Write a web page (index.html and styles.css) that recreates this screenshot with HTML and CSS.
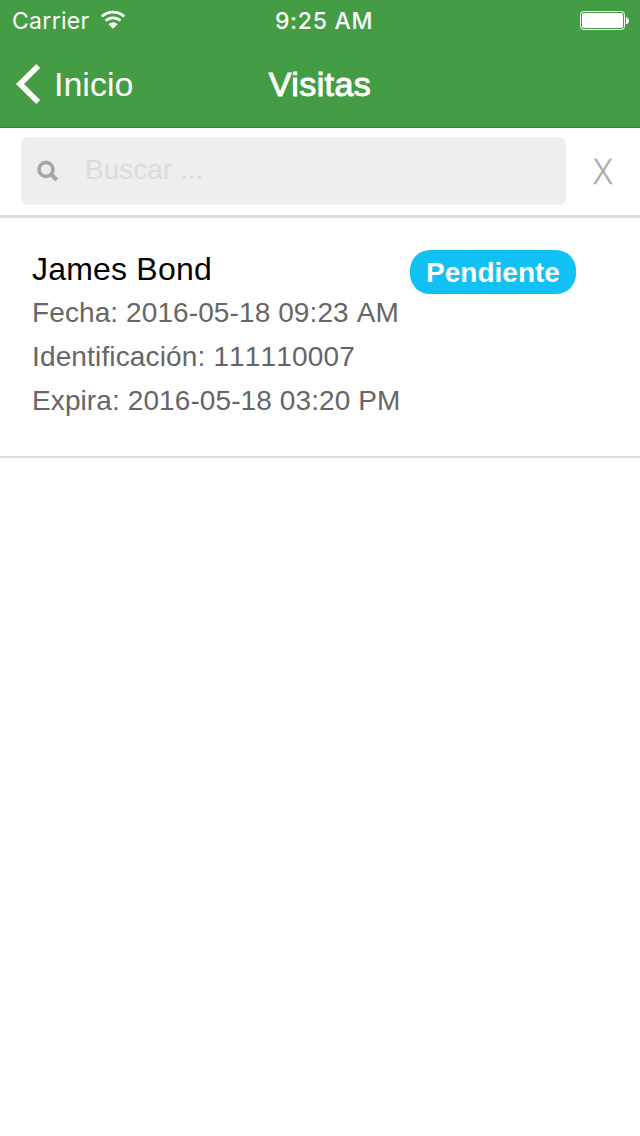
FILE: index.html
```
<!DOCTYPE html>
<html lang="es">
<head>
  <meta charset="UTF-8">
  <title>Visitas</title>
  <link rel="stylesheet" href="styles.css">
</head>
<body>
  <header class="header">
    <div class="status-bar">
      <div class="carrier">
        <span class="carrier-name">Carrier</span>
        <svg class="wifi" width="26" height="20" viewBox="0 0 26 20">
          <path d="M1.8 6.6a16.2 16.2 0 0 1 22.4 0M5.6 10.8a10.6 10.6 0 0 1 14.8 0" fill="none" stroke="#fff" stroke-width="2.8"/>
          <path d="M8.4 14.2a6.6 6.6 0 0 1 9.2 0L13 18.8z" fill="#fff"/>
        </svg>
      </div>
      <span class="time">9:25 AM</span>
      <svg class="battery" width="49" height="20" viewBox="0 0 49 20">
        <rect x=".5" y="1.5" width="44" height="18" rx="3" fill="none" stroke="#fff" stroke-width="1"/>
        <rect x="2" y="3" width="41" height="15" rx="1.8" fill="#fff"/>
        <path d="M46 7.2c4 1 4 6 0 7z" fill="#fff"/>
      </svg>
    </div>
    <nav class="nav-bar">
      <a class="back" href="#">
        <svg width="25" height="40" viewBox="0 0 25 40">
          <path d="M22.2 2 4 20l18.2 18" fill="none" stroke="#fff" stroke-width="5.6"/>
        </svg>
        <span class="back-label">Inicio</span>
      </a>
      <h1 class="title">Visitas</h1>
    </nav>
  </header>

  <div class="search-bar">
    <label class="search">
      <svg width="22" height="22" viewBox="0 0 22 22">
        <circle cx="9" cy="9.4" r="7" fill="none" stroke="#a6a6a6" stroke-width="3.6"/>
        <path d="m13.8 14 6 6" stroke="#a6a6a6" stroke-width="4.2"/>
      </svg>
      <input class="search-input" type="text" placeholder="Buscar ...">
    </label>
    <button class="clear">X</button>
  </div>

  <ul class="visits">
    <li class="visit">
      <div class="visit-info">
        <h2 class="visit-name">James Bond</h2>
        <p class="visit-date">Fecha: 2016-05-18 09:23 AM</p>
        <p class="visit-id">Identificación: 111110007</p>
        <p class="visit-date">Expira: 2016-05-18 03:20 PM</p>
      </div>
      <span class="badge">Pendiente</span>
    </li>
  </ul>
</body>
</html>
```

FILE: styles.css
```
* {
  box-sizing: border-box;
}
body {
  margin: 0;
  background: #fff;
  font-family: "Liberation Sans", Arial, sans-serif;
}
.header {
  height: 128px;
  background: #449d44;
  border-bottom: 1px solid #398439;
  color: #fff;
}
.status-bar {
  display: grid;
  grid-template-columns: 1fr auto 1fr;
  align-items: center;
  height: 40px;
  padding: 0 11px 0 12px;
  font-family: Inter, sans-serif;
  font-size: 23px;
}
.carrier {
  display: flex;
  align-items: center;
  gap: 10px;
}
.carrier-name {
  padding-top: 2px;
  letter-spacing: 0.3px;
}
.time {
  padding: 2px 0 0 7px;
  font-weight: 500;
  letter-spacing: 0.7px;
}
.battery {
  justify-self: end;
}
.nav-bar {
  display: grid;
  grid-template-columns: 1fr auto 1fr;
  align-items: center;
  height: 88px;
  padding: 0 16px;
}
.back {
  display: flex;
  align-items: center;
  gap: 13px;
  color: #fff;
  text-decoration: none;
  font-size: 34px;
}
.title {
  margin: 0;
  font-size: 34px;
  font-weight: normal;
  letter-spacing: 0.4px;
  -webkit-text-stroke: 1px #fff;
}
.search-bar {
  display: flex;
  height: 90px;
  padding: 9px 0 10px 21px;
  border-bottom: 3px solid #ddd;
}
.search {
  display: flex;
  align-items: center;
  gap: 26px;
  width: 545px;
  padding-left: 16px;
  background: #eee;
  border-radius: 7px;
}
.search-input {
  flex: 1;
  min-width: 0;
  padding: 0 0 3px;
  border: 0;
  background: none;
  font: 28px "Liberation Sans", Arial, sans-serif;
}
.search-input::placeholder {
  color: #dcdcdc;
}
.clear {
  flex: 1;
  padding: 0 0 1px;
  border: 0;
  background: none;
  color: #aaa;
  font: 300 34px "Open Sans", Arial, sans-serif;
  -webkit-text-stroke: 0.5px #aaa;
}
.visits {
  margin: 0;
  padding: 0;
  list-style: none;
}
.visit {
  display: flex;
  justify-content: space-between;
  align-items: flex-start;
  height: 240px;
  padding: 32px 64px 0 32px;
  border-bottom: 2px solid #ddd;
}
.visit-name {
  margin: 0;
  padding-bottom: 3px;
  font-size: 32px;
  font-weight: normal;
  line-height: 38px;
  letter-spacing: 0.2px;
}
.visit-info p {
  margin: 0;
  color: #666;
  font-size: 28px;
  line-height: 44px;
  font-kerning: none;
}
.visit-date {
  letter-spacing: 0.1px;
}
.visit-id {
  letter-spacing: 0.15px;
}
.badge {
  width: 166px;
  height: 44px;
  border-radius: 20px;
  background: #11c1f3;
  color: #fff;
  font-size: 28px;
  font-weight: bold;
  line-height: 45px;
  text-align: center;
}
```
